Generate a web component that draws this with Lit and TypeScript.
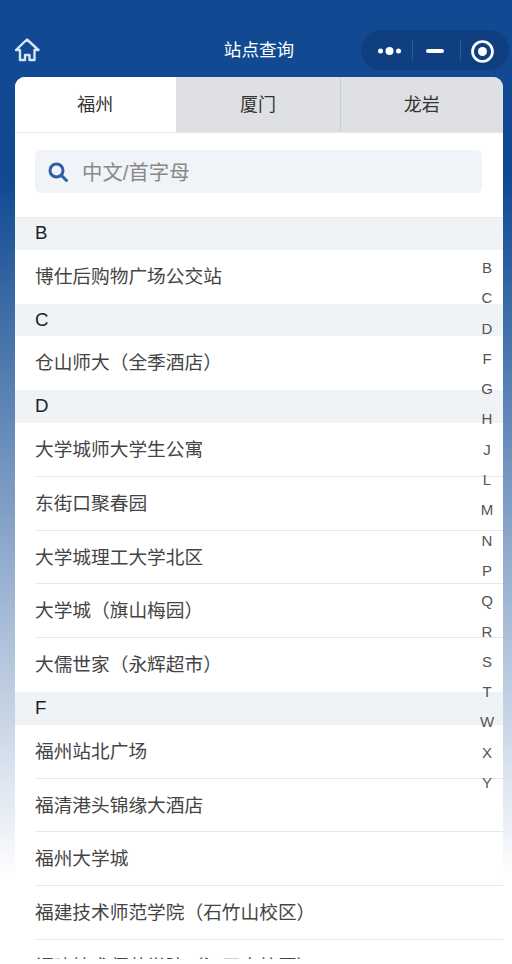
import { LitElement, html, css } from "lit";
import { customElement } from "lit/decorators.js";

const groups: [string, string[]][] = [
  ["B", ["博仕后购物广场公交站"]],
  ["C", ["仓山师大（全季酒店）"]],
  ["D", ["大学城师大学生公寓", "东街口聚春园", "大学城理工大学北区", "大学城（旗山梅园）", "大儒世家（永辉超市）"]],
  ["F", ["福州站北广场", "福清港头锦缘大酒店", "福州大学城", "福建技术师范学院（石竹山校区）", "福建技术师范学院（江田中校区）"]],
];
const letters = "B C D F G H J L M N P Q R S T W X Y".split(" ");

@customElement("app-root")
export class AppRoot extends LitElement {
  static styles = css`
    :host {
      display: block;
      width: 512px;
      height: 964px;
      overflow: hidden;
      position: relative;
      font-family: "Liberation Sans", "Noto Sans CJK SC", sans-serif;
      background: linear-gradient(180deg, #114a92 0, #114a92 180px, #fff 880px);
    }
    .nav {
      height: 77px;
      box-sizing: border-box;
      padding-top: 31px;
      position: relative;
    }
    .home { position: absolute; left: 13.5px; top: 36.5px; width: 27px; height: 26px; }
    .title {
      text-align: center;
      color: #fff;
      font-size: 17.6px;
      line-height: 38px;
      margin-left: 6px;
    }
    .capsule {
      position: absolute;
      left: 361px;
      top: 30px;
      width: 148px;
      height: 40px;
      border-radius: 20px;
      background: #0f3f80;
    }
    .capsule svg { display: block; }
    .card {
      margin-left: 14.5px;
      width: 488px;
      height: 887px;
      background: #fff;
      border-radius: 10px 10px 0 0;
      overflow: hidden;
      position: relative;
    }
    .tabs { display: flex; height: 56px; box-sizing: border-box; border-bottom: 1px solid #e4e6ea; background: #dfe0e4; }
    .tab {
      flex: 1 1 0;
      display: flex;
      align-items: center;
      justify-content: center;
      box-sizing: border-box;
      padding-bottom: 3px;
      font-size: 18px;
      color: #333;
      border-left: 1px solid #c9ccd1;
    }
    .tab.on { background: #fff; border-left: none; flex: 0 0 161.5px; }
    .tab.mid { flex: 0 0 164px; border-left: none; }
    .searchwrap { padding: 17px 20.5px 24px; }
    .search {
      height: 43px;
      border-radius: 6px;
      background: #f0f3f7;
      display: flex;
      align-items: center;
      padding-left: 11px;
      gap: 12px;
      font-size: 20.4px;
      color: #888;
    }
    .search span { position: relative; top: -1px; }
    .letter {
      height: 32.8px;
      box-sizing: border-box;
      background: #f0f3f6;
      padding-left: 20.5px;
      font-size: 18.7px;
      line-height: 31px;
      color: #222;
    }
    .letter.first { border-top: 1px solid #e9ecf0; line-height: 30px; }
    .item {
      margin-left: 20.5px;
      height: 53.8px;
      box-sizing: border-box;
      font-size: 18.7px;
      line-height: 53px;
      color: #444;
      border-bottom: 1px solid #e8e8e8;
      white-space: nowrap;
    }
    .item.last { border-bottom: none; }
    .index {
      position: absolute;
      left: 464px;
      top: 176px;
      width: 17px;
      text-align: center;
      font-size: 15px;
      color: #555;
    }
    .index div { height: 30.3px; line-height: 30.3px; }
    .foot { position: absolute; left: 0; right: 0; top: 959px; height: 5px; background: #fff; }
  `;

  render() {
    return html`
      <div class="nav">
        <svg class="home" viewBox="0 0 27 26" fill="none" stroke="#d9e5f6" stroke-width="2.4" stroke-linejoin="round">
          <path d="M2 13 L13 2.5 L24.5 13 L20.5 13 L20.5 23 L15.5 23 L15.5 18 L11 18 L11 23 L6 23 L6 13 Z" />
        </svg>
        <div class="title">站点查询</div>
        <div class="capsule">
          <svg width="148" height="40" viewBox="0 0 148 40">
            <circle cx="19.5" cy="21" r="2.5" fill="#fff" />
            <circle cx="28.5" cy="21" r="4" fill="#fff" />
            <circle cx="37.5" cy="21" r="2.5" fill="#fff" />
            <rect x="51" y="9" width="1" height="22" fill="#2a5a98" />
            <rect x="65" y="19" width="18" height="4" rx="2" fill="#fff" />
            <rect x="99" y="9" width="1" height="22" fill="#2a5a98" />
            <circle cx="121.5" cy="21.5" r="10" fill="none" stroke="#fff" stroke-width="2.7" />
            <circle cx="121.5" cy="21.5" r="4.5" fill="#fff" />
          </svg>
        </div>
      </div>
      <div class="card">
        <div class="tabs">
          <div class="tab on">福州</div>
          <div class="tab mid">厦门</div>
          <div class="tab">龙岩</div>
        </div>
        <div class="searchwrap">
          <div class="search">
            <svg width="24" height="24" viewBox="0 0 24 24" fill="none" stroke="#2d5ea8" stroke-width="3">
              <circle cx="10.5" cy="10.5" r="6.5" />
              <path d="M15.5 15.5 L20.5 20.5" stroke-linecap="round" />
            </svg>
            <span>中文/首字母</span>
          </div>
        </div>
        ${groups.map(
          ([l, items], g) => html`
            <div class="letter ${g === 0 ? "first" : ""}">${l}</div>
            ${items.map((t, i) => html`<div class="item ${i === items.length - 1 && l !== "F" ? "last" : ""}">${t}</div>`)}
          `
        )}
        <div class="index">${letters.map((x) => html`<div>${x}</div>`)}</div>
      </div>
      <div class="foot"></div>
    `;
  }
}
